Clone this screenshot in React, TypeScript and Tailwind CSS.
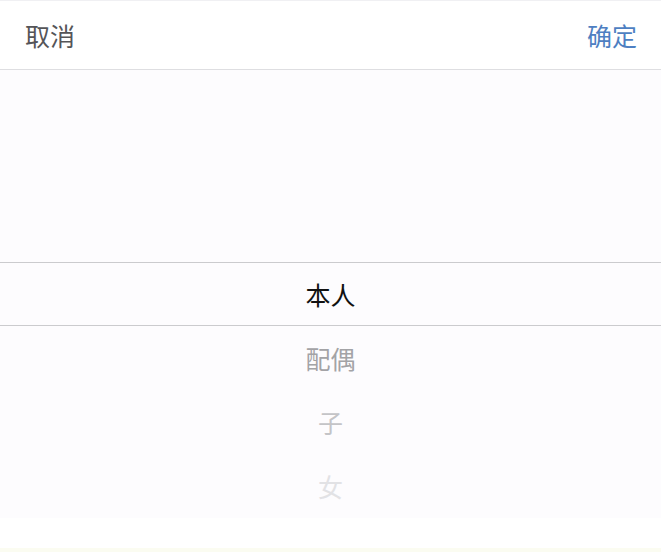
import React from "react";

const items = [
  { label: "本人", color: "text-[#111111]" },
  { label: "配偶", color: "text-[#a3a3a6]" },
  { label: "子", color: "text-[#c4c4c7]" },
  { label: "女", color: "text-[#e2e2e5]" },
];

const App: React.FC = () => {
  return (
    <div
      className="w-[661px] h-[552px] bg-white flex flex-col overflow-hidden"
      style={{ fontFamily: '"Noto Sans CJK SC", "Noto Sans", sans-serif' }}
    >
      {/* Toolbar */}
      <div className="h-[70px] shrink-0 flex items-center justify-between pl-[25px] pr-[24px] border-t border-b border-t-[#f0f0f3] border-b-[#dedee1] bg-white">
        <button className="text-[25px] leading-none text-[#555558]">取消</button>
        <button className="text-[25px] leading-none text-[#4e7fc2]">确定</button>
      </div>

      {/* Wheel */}
      <div className="h-[448px] shrink-0 bg-[#fdfcfe] overflow-hidden flex flex-col">
        <div className="h-[192px] shrink-0" />
        {items.map((item, i) => (
          <div
            key={item.label}
            className={
              i === 0
                ? "h-[64px] shrink-0 flex items-center justify-center border-y border-[#cbcbce] bg-[#fdfcfe]"
                : "h-[64px] shrink-0 flex items-center justify-center"
            }
          >
            <span className={"text-[25px] leading-none " + item.color}>{item.label}</span>
          </div>
        ))}
      </div>

      <div className="h-[30px] shrink-0 bg-white" />
      <div className="flex-1 bg-[#fbfcf1]" />
    </div>
  );
};

export default App;
